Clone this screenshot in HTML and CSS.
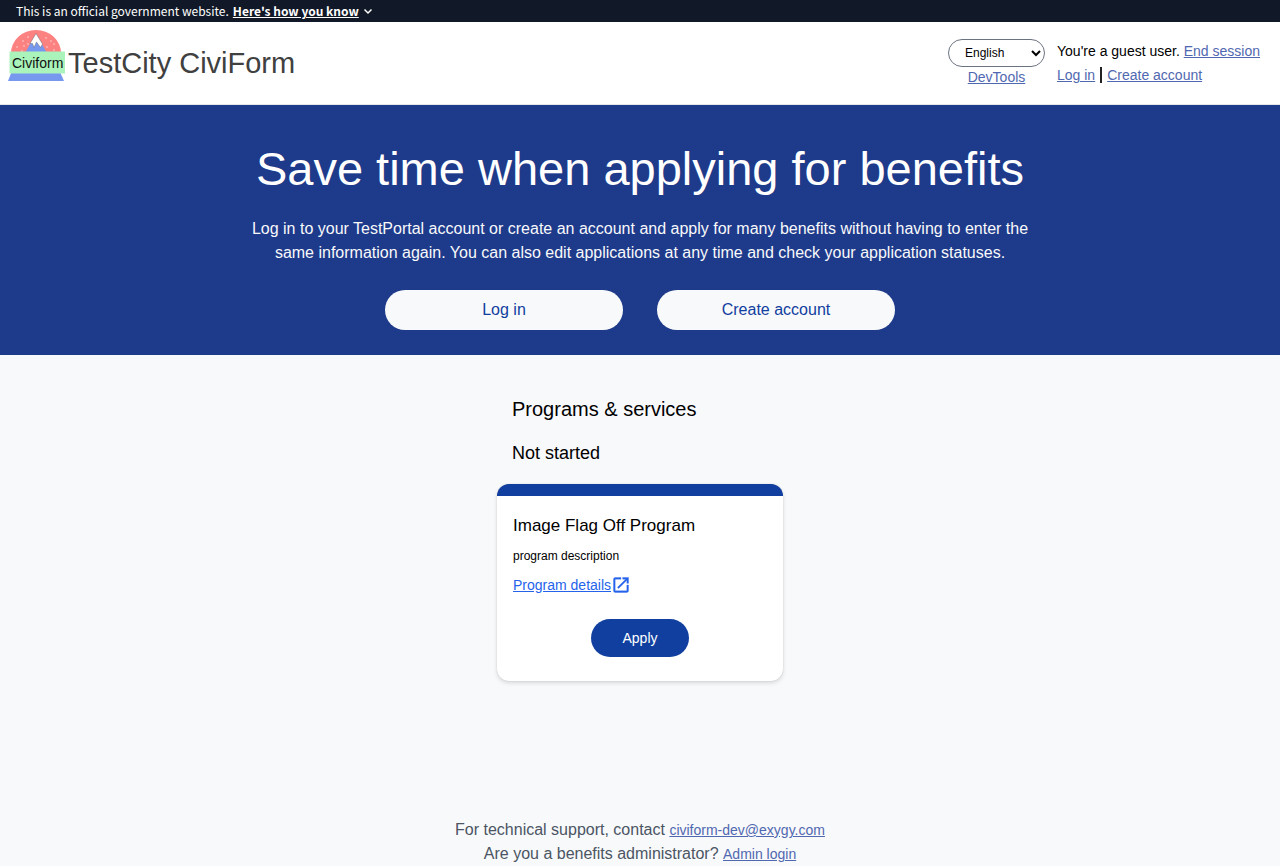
FILE: index.html
```html
<!DOCTYPE html>
<html lang="en">
<head>
<meta charset="utf-8">
<meta name="viewport" content="width=device-width, initial-scale=1">
<title>TestCity CiviForm</title>
<link rel="stylesheet" href="styles.css">
</head>
<body>
<div class="banner">
  <span>This is an official government website.</span>
  <button class="banner-toggle" type="button"><span class="banner-label">Here's how you know</span><svg class="chevron" viewBox="0 0 10 10" aria-hidden="true"><path d="M1.500 3.500 5 7 8.500 3.500" fill="none" stroke="currentColor" stroke-width="1.500"/></svg></button>
</div>
<header class="header">
  <a class="brand" href="#">
    <svg class="logo" viewBox="0 0 58 52" role="img" aria-label="Civiform logo">
      <path d="M3 23A25 23 0 0 1 53 23Z" fill="#fc8181"/>
      <path d="M17 23 28 4 39 23Z" fill="#7698ef"/>
      <path d="M22 13.500 28 3.500 34.500 14 32.500 17.500 28.500 12 26 17.500 24.500 13.500Z" fill="#fff" stroke="#555" stroke-width=".4"/>
      <g fill="#fed7d7"><circle cx="9" cy="17" r=".8"/><circle cx="15" cy="11" r=".8"/><circle cx="20" cy="7" r=".8"/><circle cx="16" cy="16" r=".8"/><circle cx="20" cy="14" r=".8"/><circle cx="14" cy="21" r=".8"/><circle cx="38" cy="8" r=".8"/><circle cx="43" cy="11" r=".8"/><circle cx="39" cy="17" r=".8"/><circle cx="46" cy="14" r=".8"/><circle cx="46" cy="20" r=".8"/></g>
      <path d="M3.500 42H52L56 51H0Z" fill="#7698ef"/>
      <path d="M1.500 21.500H57V43.500H1.500Z" fill="#aaf3bb"/>
      <text class="logo-text" x="4" y="38">Civiform</text>
    </svg>
    <span class="brand-name">TestCity CiviForm</span>
  </a>
  <div class="account">
    <div class="language">
      <select class="language-select" aria-label="Language"><option>English</option></select>
      <a class="link" href="#">DevTools</a>
    </div>
    <div class="session">
      <div>You're a guest user. <a class="link" href="#">End session</a></div>
      <div class="session-links"><a class="link" href="#">Log in</a><span class="divider"></span><a class="link" href="#">Create account</a></div>
    </div>
  </div>
</header>
<main>
  <section class="hero">
    <h1 class="hero-title">Save time when applying for benefits</h1>
    <p class="hero-text">Log in to your TestPortal account or create an account and apply for many benefits without having to enter the same information again. You can also edit applications at any time and check your application statuses.</p>
    <div class="hero-actions">
      <button class="hero-button" type="button">Log in</button>
      <button class="hero-button" type="button">Create account</button>
    </div>
  </section>
  <section class="programs">
    <h2 class="programs-title">Programs &amp; services</h2>
    <h3 class="programs-subtitle">Not started</h3>
    <article class="card">
      <h4 class="card-title">Image Flag Off Program</h4>
      <p class="card-text">program description</p>
      <a class="card-link" href="#"><span>Program details</span><svg class="external" viewBox="0 0 24 24" aria-hidden="true"><path fill="currentColor" stroke="currentColor" stroke-width=".4" d="M19 19H5V5h7V3H5a2 2 0 0 0-2 2v14a2 2 0 0 0 2 2h14c1.100 0 2-.9 2-2v-7h-2v7ZM14 3v2h3.590l-9.830 9.830 1.410 1.410L19 6.410V10h2V3h-7Z"/></svg></a>
      <button class="apply" type="button">Apply</button>
    </article>
  </section>
</main>
<footer class="footer">
  <div>For technical support, contact <a class="link" href="#">civiform-dev@exygy.com</a></div>
  <div>Are you a benefits administrator? <a class="link" href="#">Admin login</a></div>
</footer>
</body>
</html>
```
FILE: styles.css
```css
* { box-sizing: border-box; }
body {
  margin: 0;
  min-height: 100vh;
  display: flex;
  flex-direction: column;
  background: #f8f9fb;
  color: #000;
  font: 16px/24px "Liberation Sans", Arial, sans-serif;
}
h1, h2, h3, h4, p { margin: 0; font-weight: 400; }
button, select { font-family: inherit; }
main { flex: 1; }
.banner {
  display: flex;
  align-items: center;
  gap: 4px;
  padding: 0 16px;
  height: 22px;
  background: #111827;
  color: #fff;
  font: 12px/20px "Noto Sans CJK SC", sans-serif;
}
.banner-toggle {
  display: flex;
  align-items: center;
  gap: 4px;
  padding: 0;
  border: 0;
  background: none;
  color: inherit;
  font: inherit;
}
.banner-label { font-weight: 700; text-decoration: underline; }
.chevron { width: 10px; height: 10px; }
.header {
  display: flex;
  justify-content: space-between;
  align-items: flex-start;
  min-height: 83px;
  padding: 8px 20px 8px 8px;
  border-bottom: 1px solid #e5e7eb;
  background: #fff;
}
.brand { display: flex; align-items: flex-start; gap: 2px; color: #404040; text-decoration: none; }
.logo { width: 58px; height: 52px; }
.logo-text { font-family: "Liberation Sans", Arial, sans-serif; font-size: 14px; fill: #111; }
.brand-name { font-size: 29px; line-height: 36px; padding-top: 15px; }
.account { display: flex; gap: 12px; padding-top: 9px; font-size: 14px; }
.language { display: flex; flex-direction: column; align-items: center; line-height: 20px; }
.language-select {
  width: 97px;
  height: 28px;
  padding: 0 0 0 12px;
  border: 1px solid #6b7280;
  border-radius: 14px;
  background: #fff;
  color: #000;
  font-size: 12px;
}
.link { color: #5068b0; font-size: 14px; }
.session-links { display: flex; align-items: center; gap: 5px; }
.divider { width: 2px; height: 16px; background: #222; }
.hero {
  display: flex;
  flex-direction: column;
  align-items: center;
  padding: 40px 16px 25px;
  background: #1e3a8a;
  color: #f8f9fb;
  text-align: center;
}
.hero-title { font-size: 47px; line-height: 48px; color: #fff; }
.hero-text { max-width: 800px; margin-top: 24px; }
.hero-actions { display: flex; gap: 34px; margin-top: 25px; }
.hero-button {
  width: 238px;
  height: 40px;
  padding: 0;
  border: 0;
  border-radius: 20px;
  background: #f8f9fb;
  color: #113f9f;
  font-size: 16px;
}
.programs { width: 286px; margin: 0 auto; padding-top: 40px; }
.programs-title { margin-left: 15px; font-size: 20px; line-height: 28px; }
.programs-subtitle { margin: 16px 0 17px 15px; font-size: 18px; line-height: 28px; }
.card {
  display: flex;
  flex-direction: column;
  align-items: flex-start;
  padding: 16px 16px 24px;
  border-top: 12px solid #113f9f;
  border-radius: 12px;
  background: #fff;
  box-shadow: 0 0 1px #0003, 0 2px 4px #0002;
}
.card-title { font-size: 17px; line-height: 28px; }
.card-text { margin-top: 8px; font-size: 12px; line-height: 16px; }
.card-link { display: flex; align-items: center; margin-top: 11px; color: #2563eb; font-size: 14px; line-height: 20px; }
.external { width: 20px; height: 20px; }
.apply {
  align-self: center;
  width: 98px;
  height: 38px;
  margin-top: 24px;
  padding: 0;
  border: 0;
  border-radius: 19px;
  background: #113f9f;
  color: #fff;
  font-size: 14px;
}
.footer { color: #4b5563; text-align: center; }
```
